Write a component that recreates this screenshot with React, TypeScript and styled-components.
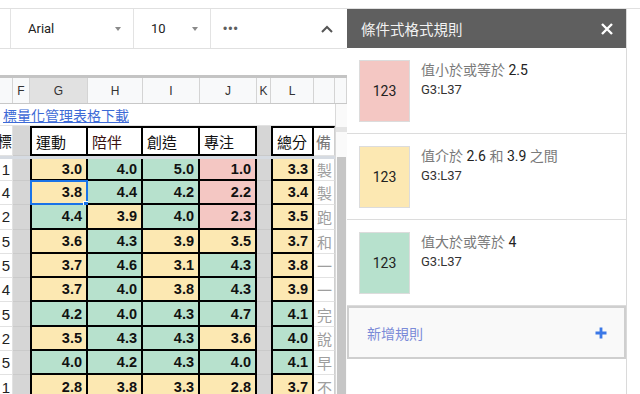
import styled, { createGlobalStyle } from "styled-components";

type Tone = "y" | "g" | "r";

const TONES: Record<Tone, string> = {
  y: "#fce8b2",
  g: "#b7e1cd",
  r: "#f4c7c3",
};

const COLS = "13px 17px 58px 55px 57px 57px 14px 43px 21px";

const rows: { e: string; scores: [string, Tone][]; total: [string, Tone]; note: string }[] = [
  { e: "1", scores: [["3.0", "y"], ["4.0", "g"], ["5.0", "g"], ["1.0", "r"]], total: ["3.3", "y"], note: "製" },
  { e: "4", scores: [["3.8", "y"], ["4.4", "g"], ["4.2", "g"], ["2.2", "r"]], total: ["3.4", "y"], note: "製" },
  { e: "2", scores: [["4.4", "g"], ["3.9", "y"], ["4.0", "g"], ["2.3", "r"]], total: ["3.5", "y"], note: "跑" },
  { e: "5", scores: [["3.6", "y"], ["4.3", "g"], ["3.9", "y"], ["3.5", "y"]], total: ["3.7", "y"], note: "和" },
  { e: "5", scores: [["3.7", "y"], ["4.6", "g"], ["3.1", "y"], ["4.3", "g"]], total: ["3.8", "y"], note: "一" },
  { e: "4", scores: [["3.7", "y"], ["4.0", "g"], ["3.8", "y"], ["4.3", "g"]], total: ["3.9", "y"], note: "一" },
  { e: "5", scores: [["4.2", "g"], ["4.0", "g"], ["4.3", "g"], ["4.7", "g"]], total: ["4.1", "g"], note: "完" },
  { e: "2", scores: [["3.5", "y"], ["4.3", "g"], ["4.3", "g"], ["3.6", "y"]], total: ["4.0", "g"], note: "說" },
  { e: "5", scores: [["4.0", "g"], ["4.2", "g"], ["4.3", "g"], ["4.0", "g"]], total: ["4.1", "g"], note: "早" },
  { e: "1", scores: [["2.8", "y"], ["3.8", "y"], ["3.3", "y"], ["2.8", "y"]], total: ["3.7", "y"], note: "不" },
];

const GlobalStyle = createGlobalStyle`
  html, body {
    margin: 0;
    padding: 0;
    background: #fff;
    font-family: "Liberation Sans", "Noto Sans CJK TC", sans-serif;
  }
`;

const App = () => {
  return (
    <>
      <GlobalStyle />
      <Page>
        <TopStrip />
        <Main>
          <SheetArea>
            <Toolbar>
              <ToolGap />
              <ToolGroup $width={123}>
                <ToolText>Arial</ToolText>
                <Caret />
              </ToolGroup>
              <ToolGroup $width={77}>
                <ToolText>10</ToolText>
                <Caret />
              </ToolGroup>
              <MoreGroup>
                <Dots>•••</Dots>
                <svg width="12" height="8" viewBox="0 0 12 8">
                  <path d="M1 7 L6 2 L11 7" fill="none" stroke="#555" strokeWidth="2" />
                </svg>
              </MoreGroup>
            </Toolbar>
            <FormulaBar />
            <HeaderBand />
            <ColumnHeaders>
              {["", "F", "G", "H", "I", "J", "K", "L", ""].map((c, i) => (
                <ColHead key={i} $active={c === "G"}>
                  {c}
                </ColHead>
              ))}
              <ColHead />
            </ColumnHeaders>
            <Body>
              <Grid>
                <LinkRow>
                  <LinkText>標量化管理表格下載</LinkText>
                </LinkRow>
                <TitleRow>
                  <ClipCell>標</ClipCell>
                  <GrayCell />
                  <TitleCell $first>運動</TitleCell>
                  <TitleCell $accent>陪伴</TitleCell>
                  <TitleCell>創造</TitleCell>
                  <TitleCell>專注</TitleCell>
                  <GrayCell />
                  <TitleCell $first>總分</TitleCell>
                  <NoteTitle>備</NoteTitle>
                </TitleRow>
                <FreezeLine />
                {rows.map((r, i) => (
                  <DataRow key={i} $short={i === 0}>
                    <ECell>{r.e}</ECell>
                    <GrayCell />
                    {r.scores.map(([v, t], j) => (
                      <ScoreCell key={j} $tone={t} $first={j === 0}>
                        {v}
                        {i === 1 && j === 0 && (
                          <>
                            <Selection />
                            <Handle />
                          </>
                        )}
                      </ScoreCell>
                    ))}
                    <GrayCell />
                    <ScoreCell $tone={r.total[1]} $first>
                      {r.total[0]}
                    </ScoreCell>
                    <NoteCell>{r.note}</NoteCell>
                  </DataRow>
                ))}
              </Grid>
              <Scrollbar>
                <ScrollBand />
                <ScrollThumb />
              </Scrollbar>
            </Body>
          </SheetArea>
          <Panel>
            <PanelHeader>
              <PanelTitle>條件式格式規則</PanelTitle>
              <svg width="12" height="12" viewBox="0 0 12 12">
                <path d="M1 1 L11 11 M11 1 L1 11" stroke="#fff" strokeWidth="2.4" />
              </svg>
            </PanelHeader>
            <RuleCard>
              <Swatch $tone="r">123</Swatch>
              <RuleInfo>
                <RuleText>
                  值小於或等於 <Num>2.5</Num>
                </RuleText>
                <RuleRange>G3:L37</RuleRange>
              </RuleInfo>
            </RuleCard>
            <RuleCard>
              <Swatch $tone="y">123</Swatch>
              <RuleInfo>
                <RuleText>
                  值介於 <Num>2.6</Num> 和 <Num>3.9</Num> 之間
                </RuleText>
                <RuleRange>G3:L37</RuleRange>
              </RuleInfo>
            </RuleCard>
            <RuleCard>
              <Swatch $tone="g">123</Swatch>
              <RuleInfo>
                <RuleText>
                  值大於或等於 <Num>4</Num>
                </RuleText>
                <RuleRange>G3:L37</RuleRange>
              </RuleInfo>
            </RuleCard>
            <AddRule>
              <AddText>新增規則</AddText>
              <svg width="12" height="12" viewBox="0 0 12 12">
                <path d="M6 0.5 V11.5 M0.5 6 H11.5" stroke="#3b78e7" strokeWidth="2.8" />
              </svg>
            </AddRule>
          </Panel>
        </Main>
      </Page>
    </>
  );
};

const Page = styled.div`
  width: 640px;
  height: 394px;
  overflow: hidden;
  display: flex;
  flex-direction: column;
`;

const TopStrip = styled.div`
  height: 8px;
  flex-shrink: 0;
  border-bottom: 1px solid #e0e0e0;
`;

const Main = styled.div`
  flex: 1;
  display: flex;
  min-height: 0;
`;

const SheetArea = styled.div`
  width: 347px;
  flex-shrink: 0;
  display: flex;
  flex-direction: column;
  overflow: hidden;
`;

const Toolbar = styled.div`
  height: 39px;
  flex-shrink: 0;
  display: flex;
  border-bottom: 1px solid #e0e0e0;
`;

const ToolGap = styled.div`
  width: 10px;
  border-right: 1px solid #e3e3e3;
`;

const ToolGroup = styled.div<{ $width: number }>`
  width: ${(p) => p.$width}px;
  box-sizing: border-box;
  border-right: 1px solid #e3e3e3;
  display: flex;
  align-items: center;
  justify-content: space-between;
  padding: 0 12px 0 17px;
`;

const ToolText = styled.span`
  font-family: Roboto, "Liberation Sans", sans-serif;
  font-size: 13px;
  color: #222;
`;

const Caret = styled.span`
  width: 0;
  height: 0;
  border-left: 3.5px solid transparent;
  border-right: 3.5px solid transparent;
  border-top: 4px solid #8a8a8a;
`;

const MoreGroup = styled.div`
  flex: 1;
  display: flex;
  align-items: center;
  justify-content: space-between;
  padding: 0 14px 0 12px;
`;

const Dots = styled.span`
  font-size: 12px;
  letter-spacing: 1px;
  color: #5f5f5f;
`;

const FormulaBar = styled.div`
  height: 26px;
  flex-shrink: 0;
`;

const HeaderBand = styled.div`
  height: 3px;
  flex-shrink: 0;
  background: #c4c4c4;
`;

const ColumnHeaders = styled.div`
  display: grid;
  grid-template-columns: ${COLS} 12px;
  height: 25px;
  flex-shrink: 0;
  border-bottom: 1px solid #c8c8c8;
  background: #f8f9fa;
`;

const ColHead = styled.div<{ $active?: boolean }>`
  border-right: 1px solid #d4d4d4;
  background: ${(p) => (p.$active ? "#e1e1e1" : "transparent")};
  display: flex;
  align-items: center;
  justify-content: center;
  font-size: 12px;
  color: #333;
`;

const Body = styled.div`
  flex: 1;
  display: flex;
  min-height: 0;
`;

const Grid = styled.div`
  width: 335px;
  flex-shrink: 0;
  display: flex;
  flex-direction: column;
`;

const LinkRow = styled.div`
  height: 21px;
  flex-shrink: 0;
  display: flex;
  align-items: center;
  padding-left: 3px;
  border-bottom: 1px solid #e2e2e2;
  overflow: hidden;
`;

const LinkText = styled.span`
  font-size: 14px;
  color: #3d6ad6;
  text-decoration: underline;
  white-space: nowrap;
`;

const TitleRow = styled.div`
  display: grid;
  grid-template-columns: ${COLS};
  height: 30px;
  flex-shrink: 0;
`;

const DataRow = styled.div<{ $short?: boolean }>`
  display: grid;
  grid-template-columns: ${COLS};
  height: ${(p) => (p.$short ? "22px" : "24.3px")};
  flex-shrink: 0;
`;

const PlainCell = styled.div`
  box-sizing: border-box;
  border-right: 1px solid #e2e2e2;
  border-bottom: 1px solid #e2e2e2;
  display: flex;
  align-items: center;
  overflow: hidden;
  white-space: nowrap;
`;

const ClipCell = styled(PlainCell)`
  justify-content: flex-end;
  font-size: 15px;
  color: #222;
`;

const ECell = styled(PlainCell)`
  justify-content: flex-end;
  padding-right: 2px;
  font-size: 15px;
  color: #222;
`;

const GrayCell = styled.div`
  background: #d6d6d6;
  border-bottom: 1px solid #cacaca;
`;

const TitleCell = styled.div<{ $first?: boolean; $accent?: boolean }>`
  box-sizing: border-box;
  background: #fff;
  border-top: 2px solid #000;
  border-right: 2px solid #000;
  border-bottom: 2px solid #000;
  border-left: ${(p) => (p.$first ? "2px solid #000" : "none")};
  display: flex;
  align-items: center;
  padding-left: 4px;
  font-size: 15px;
  color: ${(p) => (p.$accent ? "#3a1010" : "#111")};
  white-space: nowrap;
  overflow: hidden;
`;

const NoteTitle = styled(PlainCell)`
  border-top: 2px solid #000;
  border-right-color: #cfcfcf;
  padding-left: 2px;
  font-size: 15px;
  color: #777;
`;

const FreezeLine = styled.div`
  height: 3px;
  flex-shrink: 0;
  background: #d6dbe2;
`;

const ScoreCell = styled.div<{ $tone: Tone; $first?: boolean }>`
  position: relative;
  box-sizing: border-box;
  background: ${(p) => TONES[p.$tone]};
  border-right: 2px solid #000;
  border-bottom: 2px solid #000;
  border-left: ${(p) => (p.$first ? "2px solid #000" : "none")};
  display: flex;
  align-items: center;
  justify-content: flex-end;
  padding-right: 4px;
  font-size: 14.5px;
  font-weight: bold;
  color: #111;
`;

const Selection = styled.div`
  position: absolute;
  inset: -1px -2px -2px -2px;
  border: 2px solid #1a73e8;
  pointer-events: none;
`;

const Handle = styled.div`
  position: absolute;
  right: -5px;
  bottom: -6px;
  width: 6px;
  height: 6px;
  background: #1a73e8;
  border: 1px solid #fff;
`;

const NoteCell = styled(PlainCell)`
  border-right-color: #cfcfcf;
  padding-left: 3px;
  font-size: 15px;
  color: #9e9e9e;
`;

const Scrollbar = styled.div`
  flex: 1;
  box-sizing: border-box;
  border-left: 1px solid #dadada;
  background: #fafafa;
  display: flex;
  flex-direction: column;
  padding-top: 23px;
`;

const ScrollBand = styled.div`
  height: 5px;
  background: #e4e4e4;
  margin-bottom: 25px;
`;

const ScrollThumb = styled.div`
  flex: 1;
  margin: 0 1px 0 1px;
  background: #c6c6c6;
`;

const Panel = styled.div`
  width: 280px;
  flex-shrink: 0;
  box-sizing: border-box;
  border-right: 1px solid #dadada;
  display: flex;
  flex-direction: column;
  font-family: Roboto, "Noto Sans CJK TC", sans-serif;
`;

const PanelHeader = styled.div`
  height: 39px;
  flex-shrink: 0;
  background: #5f5f5f;
  display: flex;
  align-items: center;
  justify-content: space-between;
  padding: 0 13px 0 14px;
`;

const PanelTitle = styled.span`
  font-size: 14.5px;
  color: #f2f2f2;
`;

const RuleCard = styled.div`
  height: 86px;
  flex-shrink: 0;
  box-sizing: border-box;
  border-bottom: 1px solid #dcdcdc;
  display: flex;
  align-items: flex-start;
  gap: 11px;
  padding: 12px 12px 0 12px;
`;

const Swatch = styled.div<{ $tone: Tone }>`
  width: 51px;
  height: 62px;
  box-sizing: border-box;
  border: 1px solid #dcdcdc;
  background: ${(p) => TONES[p.$tone]};
  display: flex;
  align-items: center;
  justify-content: center;
  font-size: 14px;
  color: #222;
`;

const RuleInfo = styled.div`
  display: flex;
  flex-direction: column;
  padding-top: 1px;
`;

const RuleText = styled.div`
  font-size: 14px;
  line-height: 19px;
  color: #7a7a7a;
  white-space: nowrap;
`;

const Num = styled.span`
  color: #222;
`;

const RuleRange = styled.div`
  font-size: 13px;
  line-height: 19px;
  color: #333;
`;

const AddRule = styled.div`
  height: 53px;
  flex-shrink: 0;
  box-sizing: border-box;
  border: 2px solid #cfcfcf;
  background: #f9f9f9;
  display: flex;
  align-items: center;
  justify-content: space-between;
  padding: 0 17px 0 18px;
`;

const AddText = styled.span`
  font-size: 14px;
  color: #7b8bd8;
`;

export default App;
